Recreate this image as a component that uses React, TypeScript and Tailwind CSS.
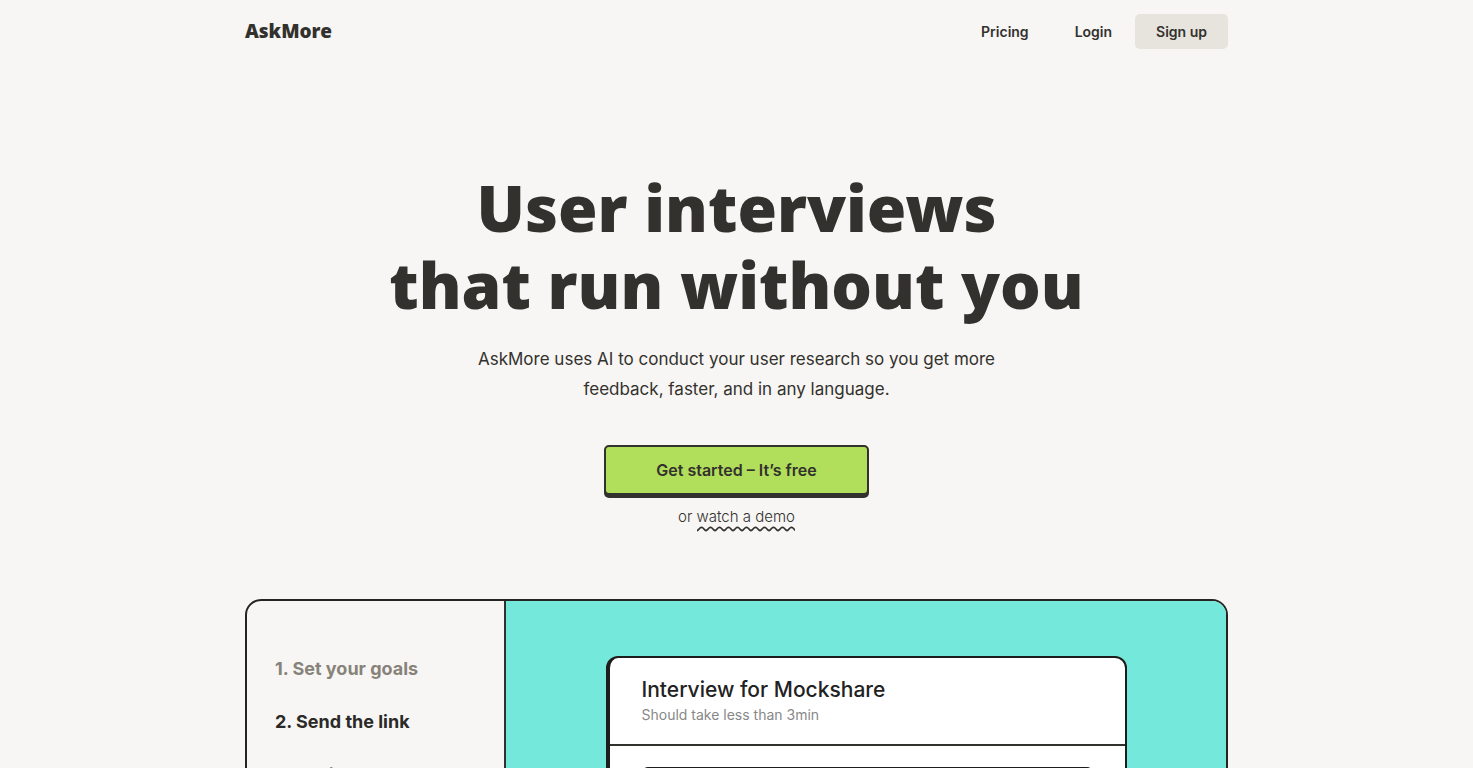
const steps = [
  { title: "1. Set your goals", active: false },
  { title: "2. Send the link", active: true },
  { title: "3. Review the answers", active: false },
];

const Navbar = () => (
  <header className="flex items-center justify-between pt-[14px]">
    <a href="#" className="font-['Noto_Sans',sans-serif] text-[19px] font-black leading-[35px]">
      AskMore
    </a>
    <nav className="flex items-center text-[14px] font-semibold leading-[18px]">
      <a href="#pricing" className="px-[23px]">Pricing</a>
      <a href="#login" className="px-[23px]">Login</a>
      <button type="button" className="h-[35px] rounded-[5px] bg-[#e7e4dd] px-[21px]">
        Sign up
      </button>
    </nav>
  </header>
);

const Hero = () => (
  <section className="flex flex-col items-center pt-[120px] text-center">
    <h1 className="font-['Noto_Sans',sans-serif] text-[64px] font-black leading-[77px]">
      User interviews
      <br />
      that run without you
    </h1>
    <p className="mt-[21px] max-w-[560px] text-[17px] leading-[30px]">
      AskMore uses AI to conduct your user research so you get more feedback, faster, and in any language.
    </p>
    <button
      type="button"
      className="mt-[41px] h-[50px] w-[265px] rounded-[5px] border-2 border-[#33312d] bg-[#b1de5b] text-[16px] font-semibold shadow-[0_3px_0_#33312d]"
    >
      Get started – It’s free
    </button>
    <p className="mt-[9px] text-[15px] font-light leading-[26px]">
      or{" "}
      <a href="#demo" className="relative inline-block">
        watch a demo
        <svg className="absolute -bottom-[2px] left-0 h-[6px] w-full" fill="none" stroke="currentColor">
          <defs>
            <pattern id="wave" width="9" height="6" patternUnits="userSpaceOnUse">
              <path d="M-1 4.6 Q0 4.8 1 4 L3 2 Q4.5 .6 6 2 L8 4 Q9 4.8 10 4.6" strokeWidth="1.7" />
            </pattern>
          </defs>
          <rect width="100%" height="6" fill="url(#wave)" stroke="none" />
        </svg>
      </a>
    </p>
  </section>
);

const InterviewCard = () => (
  <div className="mx-auto w-[521px] rounded-xl border-2 border-l-4 border-[#1e1d1b] bg-white">
    <div className="border-b-2 border-[#33312d] px-8 pb-[19px] pt-[17px]">
      <h2 className="text-[21px] font-medium leading-[30px] text-[#222]">Interview for Mockshare</h2>
      <p className="text-[14px] leading-[20px] text-[#888]">Should take less than 3min</p>
    </div>
    <div className="px-8 pt-[21px]">
      <div className="h-40 rounded-md border-2 border-[#1e1d1b]" />
    </div>
  </div>
);

const Demo = () => (
  <section className="mt-[69px] flex min-h-[480px] overflow-hidden rounded-2xl border-2 border-[#262421]">
    <ul className="flex w-[259px] shrink-0 flex-col gap-[23px] border-r-2 border-[#33312d] px-7 pt-[53px] text-[18px] font-bold leading-[30px]">
      {steps.map((step) => (
        <li key={step.title} className={step.active ? "text-[#2b2a27]" : "text-[#87837a]"}>
          {step.title}
        </li>
      ))}
    </ul>
    <div className="flex-1 bg-[#75e8dc] pt-[55px]">
      <InterviewCard />
    </div>
  </section>
);

export default function App() {
  return (
    <main className="h-screen overflow-hidden bg-[#f7f6f4] font-['Inter',sans-serif] text-[#33312d]">
      <div className="mx-auto max-w-[983px]">
        <Navbar />
        <Hero />
        <Demo />
      </div>
    </main>
  );
}
